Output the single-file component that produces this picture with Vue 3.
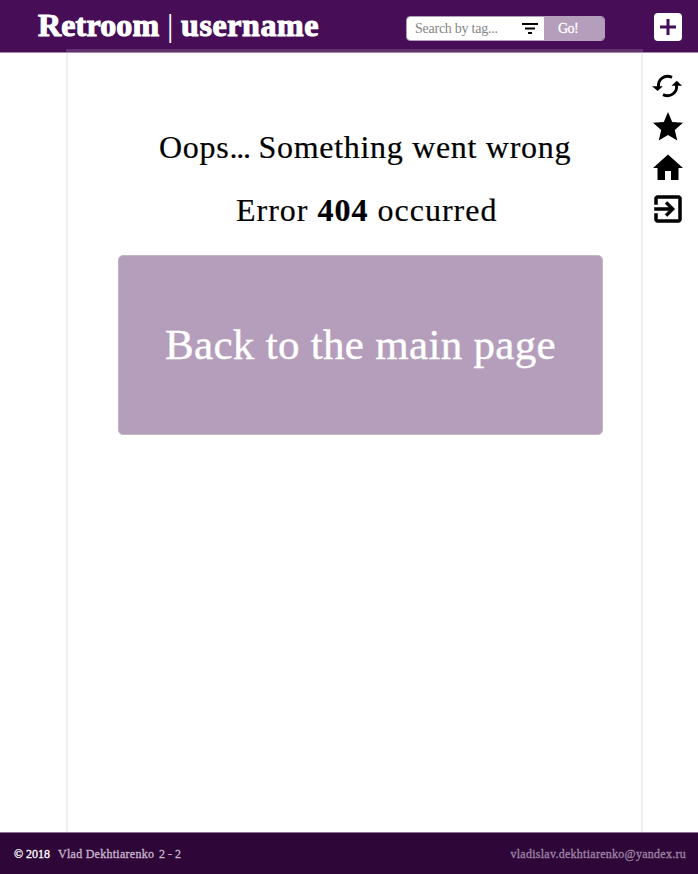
<script setup>
const icons = [
  { name: 'refresh', d: '' },
  { name: 'star', d: 'M12 17.27 18.18 21l-1.64-7.03L22 9.24l-7.19-.61L12 2 9.19 8.63 2 9.24l5.46 4.73L5.82 21z' },
  { name: 'home', d: 'M10 20v-6h4v6h5v-8h3L12 3 2 12h3v8z' },
  { name: 'exit', d: 'M10.09 15.59 11.5 17l5-5-5-5-1.41 1.41L12.67 11H3v2h9.67zM19 3H5c-1.11 0-2 .9-2 2v4h2V5h14v14H5v-4H3v4c0 1.1.89 2 2 2h14c1.1 0 2-.9 2-2V5c0-1.1-.9-2-2-2z' }
]
</script>

<template>
  <div class="page">
    <header class="header">
      <h1 class="brand"><span class="retroom">Retroom</span><span class="bar">|</span><span class="user">username</span></h1>
      <form class="search" @submit.prevent>
        <div class="field">
          <span class="hint">Search by tag...</span>
          <svg class="filter" viewBox="0 0 16 11"><path d="M0 0h16v2H0zM3 4.5h10v2H3zM6 9h4v2H6z" /></svg>
        </div>
        <button class="go"><span>Go!</span></button>
      </form>
      <button class="add">
        <svg viewBox="0 0 16 16"><path d="M6.500 0h3v6.500H16v3H9.500V16h-3V9.500H0v-3h6.500z" /></svg>
      </button>
    </header>
    <div class="middle">
      <main class="content">
        <p class="line oops">Oops<span class="dots">...</span> Something went wrong</p>
        <p class="line error">Error <b>404</b> occurred</p>
        <a class="back">Back to the main page</a>
      </main>
      <nav class="side">
        <template v-for="icon in icons" :key="icon.name">
          <svg v-if="icon.name === 'refresh'" class="refresh" viewBox="0 0 32 32">
            <path class="arc" d="M6.500 17C5.500 9.500 12.500 4 20 7.400" />
            <path class="arc" d="M24.500 15C25.500 22.500 18.500 28 11 24.600" />
            <path d="M0 16.200h10.800L5.700 21z" />
            <path d="M19.500 15.800h10.500L24.800 10.800z" />
          </svg>
          <svg v-else :class="icon.name" viewBox="0 0 24 24"><path :d="icon.d" /></svg>
        </template>
      </nav>
    </div>
    <footer class="footer">
      <span class="year">© 2018</span>
      <span class="author">Vlad Dekhtiarenko</span>
      <span class="group">2 - 2</span>
      <span class="mail">vladislav.dekhtiarenko@yandex.ru</span>
    </footer>
  </div>
</template>

<style>
body { margin: 0; background: #fff; }
</style>

<style scoped>
* { box-sizing: border-box; }
.page {
  width: 698px;
  height: 874px;
  display: flex;
  flex-direction: column;
  overflow: hidden;
  font-family: "Liberation Serif", serif;
  color: #000;
  white-space: nowrap;
}
button { border: 0; padding: 0; font: inherit; }
.header {
  flex: 0 0 53px;
  display: flex;
  align-items: flex-start;
  background: #470e57;
  border-bottom: 1px solid #a386ab;
}
.brand {
  display: flex;
  width: 368px;
  margin: 0 0 0 38px;
  padding-top: 7px;
  font-size: 32px;
  line-height: 36px;
  color: #fff;
  -webkit-text-stroke: 1.1px #fff;
}
.retroom { width: 129px; letter-spacing: 0.15px; }
.bar { width: 14px; font-weight: 400; -webkit-text-stroke: 0; }
.user { letter-spacing: 0.6px; }
.search {
  display: flex;
  width: 199px;
  height: 25px;
  margin: 16px 1px 0 0;
  border: 1px solid #b49dbb;
  border-radius: 4px;
  overflow: hidden;
  font-size: 14px;
  line-height: 23px;
}
.field {
  display: flex;
  align-items: center;
  justify-content: space-between;
  width: 137px;
  padding: 0 6px 0 8px;
  background: #fff;
}
.hint { color: #858585; letter-spacing: -0.25px; }
.filter { width: 16px; height: 11px; }
.go {
  flex: 1;
  background: #b59ebb;
  color: #fff;
  text-align: left;
  padding-left: 14px;
  letter-spacing: -0.6px;
  -webkit-text-stroke: 0.3px #fff;
}
.add {
  display: flex;
  align-items: center;
  justify-content: center;
  width: 28px;
  height: 28px;
  margin: 13px 0 0 48px;
  border-radius: 4px;
  background: #fff;
}
.add svg { width: 16px; height: 16px; fill: #470e57; }
.middle { flex: 1; display: flex; min-height: 0; }
.content {
  width: 577px;
  margin: -4px 0 0 66px;
  padding: 75px 39px 0 50px;
  border: 2px solid rgba(190, 180, 195, 0.22);
  border-top-width: 3px;
  border-bottom: 0;
}
.line { margin: 0; font-size: 32px; line-height: 40px; -webkit-text-stroke: 0.2px #000; }
.oops { padding-left: 41px; letter-spacing: 0.7px; }
.dots { letter-spacing: -1.2px; }
.error { padding: 23px 0 0 118px; letter-spacing: 1px; }
.back {
  display: flex;
  justify-content: center;
  width: 485px;
  height: 180px;
  margin-top: 25px;
  border: 1px solid #c0b7c3;
  border-radius: 5px;
  background: #b59ebb;
  color: #fff;
  font-size: 43px;
  line-height: 178px;
  letter-spacing: 0.3px;
  -webkit-text-stroke: 0.4px #fff;
}
.side {
  display: flex;
  flex-direction: column;
  align-items: center;
  width: 49px;
  padding-top: 17px;
  gap: 9px;
}
.side svg { display: block; width: 32px; height: 32px; }
.side .star, .side .home, .side .exit { width: 36px; height: 36px; margin: -2px 0 -2px 0; }
.exit path { stroke: #000; stroke-width: 0.35; }
.arc { fill: none; stroke: #000; stroke-width: 2.900; }
.footer {
  flex: 0 0 42px;
  display: flex;
  align-items: center;
  padding: 2px 12px 0 14px;
  border-top: 1px solid #8b7592;
  background: #2e0738;
  color: #b59ebb;
  font-size: 12px;
  -webkit-text-stroke: 0.3px currentColor;
}
.year { width: 44px; color: #fff; }
.author { width: 101px; letter-spacing: 0.27px; color: #c7b5cc; }
.group { color: #c7b5cc; }
.mail { margin-left: auto; letter-spacing: 0.27px; color: #9d83a5; }
</style>
